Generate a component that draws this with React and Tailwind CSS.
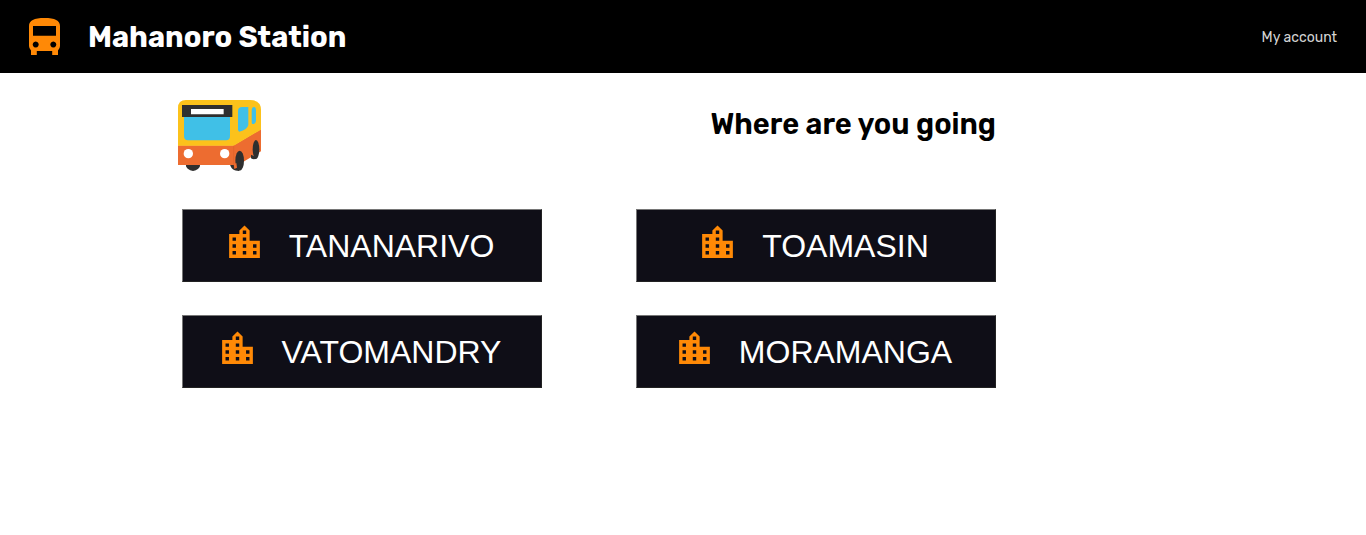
import React from "react";
import { MdLocationCity } from "react-icons/md";

const cities = ["TANANARIVO", "TOAMASIN", "VATOMANDRY", "MORAMANGA"];

function BusIcon() {
  return (
    <svg viewBox="0 0 31 37" className="h-[37px] w-[31px] shrink-0" aria-hidden="true">
      <path
        fill="#ff8906"
        fillRule="evenodd"
        d="M0 8C0 2.500 5 0 15.500 0S31 2.500 31 8V28Q31 30.500 29 32.500V37H23.200V33H7.800V37H2V32.500Q0 30.500 0 28ZM4 8H27V17.800H4ZM6.700 23.600a3 3 0 1 0 .01 0ZM24.300 23.600a3 3 0 1 0 .01 0Z"
      />
    </svg>
  );
}

function BusPicture() {
  return (
    <svg viewBox="24 30 249 213" className="h-[71px] w-[83px] shrink-0" role="img" aria-label="Bus">
      <ellipse cx="69" cy="221" rx="22" ry="22" fill="#2f2f2f" />
      <path d="M180 223H207V243C192 243 182 236 180 223Z" fill="#2f2f2f" />
      <path d="M24 166H191L273 117V184L204 225H24Z" fill="#ed6c30" />
      <path d="M24 54Q24 30 48 30H240Q273 30 273 60V119L191 167H24Z" fill="#fcc21b" />
      <path d="M42 78H180V138Q180 151 168 151H54Q42 151 42 138Z" fill="#40c0e7" />
      <path d="M36 45H187V81H36Z" fill="#2f2f2f" />
      <path d="M63 57H161V73H63Z" fill="#fff" />
      <path d="M204 62Q205 51 216 51H235V105Q232 119 208 125Q204 124 204 118Z" fill="#40c0e7" />
      <path d="M245 60Q246 51 252 51Q258 52 258 62V92Q257 102 247 102Q245 101 245 96Z" fill="#40c0e7" />
      <circle cx="55" cy="191" r="14" fill="#fff" />
      <circle cx="164" cy="191" r="14" fill="#fff" />
      <path d="M191 167V225" stroke="#d9602b" strokeWidth="1.500" />
      <ellipse cx="258" cy="178" rx="10" ry="28" fill="#2f2f2f" />
      <path d="M243 194L263 203Q254 211 243 205Z" fill="#2f2f2f" />
      <ellipse cx="209" cy="212" rx="13" ry="30" fill="#2f2f2f" />
      <path d="M191 223L199 219L201 233L193 237Z" fill="#ed6c30" />
    </svg>
  );
}

export default function App() {
  return (
    <div className="bg-white font-['Rubik','Inter',sans-serif] text-black">
      <header className="flex h-[73px] items-center bg-black px-[29px]">
        <BusIcon />
        <h1 className="ml-7 text-[29px] font-bold leading-8 text-white">Mahanoro Station</h1>
        <a href="#account" className="ml-auto pt-0.5 text-sm text-[#d4d4d4]">My account</a>
      </header>
      <main className="ml-[178px] max-w-[818px] pt-[27px]">
        <div className="flex items-start justify-between">
          <BusPicture />
          <h2 className="pt-2 text-[29px] font-semibold leading-8">Where are you going</h2>
        </div>
        <div className="mt-[38px] grid grid-cols-2 gap-x-[94px] gap-y-[33px] pl-1">
          {cities.map((city) => (
            <button
              key={city}
              type="button"
              className="flex h-[73px] items-center justify-center gap-6 border border-b-[#222] border-l-[#767676] border-r-[#222] border-t-[#767676] bg-[#0f0e17] pr-[6px] font-['Liberation_Sans',Arial,sans-serif] text-[32px] text-white"
            >
              <MdLocationCity className="mb-[6px] size-[41px] shrink-0 text-[#ff8906]" aria-hidden="true" />
              {city}
            </button>
          ))}
        </div>
      </main>
    </div>
  );
}
